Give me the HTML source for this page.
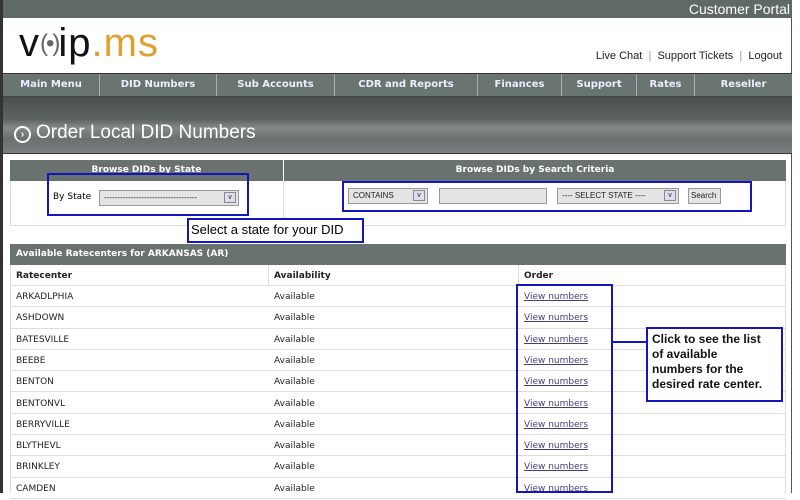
<!DOCTYPE html>
<html><head><style>
*{margin:0;padding:0;box-sizing:border-box}
body{width:800px;height:493px;overflow:hidden;background:#fff;font-family:"Liberation Sans",sans-serif;position:relative}
.a{position:absolute}
.top{left:0;top:0;width:792px;height:18px;background:#5f6966;border-left:3px solid #333}
.nav{left:3px;top:73px;width:789px;height:24px;background:#6a7572;border-top:1px solid #333;border-bottom:1px solid #444}
.nav div{position:absolute;top:0;height:22px;line-height:22px;color:#eef;font-family:"DejaVu Sans",sans-serif;font-weight:bold;font-size:10px;text-align:center;border-right:1px solid #aab}
.ban{left:3px;top:97px;width:789px;height:57px;background:linear-gradient(180deg,#4a4f4f 0%,#5e6363 40%,#858989 55%,#6a6f6f 75%,#7a7e7e 100%);border-bottom:1px solid #333}
.hd{background:#69726f;color:#fff;font-family:"DejaVu Sans",sans-serif;font-weight:bold;font-size:9px;text-align:center;line-height:21px}
.row{left:10px;width:776px;height:21.3px;border-bottom:1px solid #ddd;font-family:"DejaVu Sans",sans-serif;font-size:9px;color:#222;line-height:22px}
.row span{position:absolute;top:0}
.blue{border:2px solid #1515c0}
.sel{background:#e4e4e4;border:1px solid #999;font-size:8px;color:#222;line-height:14px;padding-left:4px}
.arr{position:absolute;right:2px;top:1px;width:12px;height:11px;border:1px solid #889;background:#dde;font-size:7px;line-height:10px;text-align:center}
a{color:#4a3d7a;text-decoration:underline}
</style></head><body>
<div class="a top"></div>
<div class="a" style="right:10px;top:1px;color:#fff;font-size:14px">Customer Portal</div>
<div class="a" style="left:0;top:18px;width:3px;height:475px;background:#333"></div>
<div class="a" style="left:791px;top:18px;width:1px;height:475px;background:#555"></div>
<div class="a" style="left:19px;top:20px;font-size:40px;letter-spacing:1px;color:#111;line-height:46px">v<span style="font-size:24px;color:#666;vertical-align:5px;letter-spacing:-2px">(•)</span>ip<span style="color:#e0a030">.ms</span></div>
<div class="a" style="right:18px;top:50px;font-size:11px;color:#222">Live Chat &nbsp;<span style="color:#999">|</span>&nbsp; Support Tickets &nbsp;<span style="color:#999">|</span>&nbsp; Logout</div>
<div class="a nav">
<div style="left:0;width:97px">Main Menu</div>
<div style="left:97px;width:117px">DID Numbers</div>
<div style="left:214px;width:118px">Sub Accounts</div>
<div style="left:332px;width:143px">CDR and Reports</div>
<div style="left:475px;width:84px">Finances</div>
<div style="left:559px;width:75px">Support</div>
<div style="left:634px;width:58px">Rates</div>
<div style="left:692px;width:97px;border:0">Reseller</div>
</div>
<div class="a ban"></div>
<div class="a" style="left:14px;top:126px;width:17px;height:17px;border:2px solid #fff;border-radius:50%;color:#fff;font-size:10px;line-height:13px;text-align:center;font-weight:bold">›</div>
<div class="a" style="left:36px;top:122px;color:#fff;font-size:19px">Order Local DID Numbers</div>

<div class="a hd" style="left:10px;top:160px;width:273px;height:21px">Browse DIDs by State</div>
<div class="a hd" style="left:284px;top:160px;width:502px;height:21px">Browse DIDs by Search Criteria</div>
<div class="a" style="left:10px;top:181px;width:776px;height:45px;border:1px solid #ddd;border-top:0"></div>
<div class="a" style="left:283px;top:181px;width:1px;height:45px;background:#ddd"></div>
<div class="a" style="left:53px;top:192px;font-size:9px;font-family:'DejaVu Sans',sans-serif">By State</div>
<div class="a sel" style="left:99px;top:190px;width:140px;height:16px">-----------------------------------<span class="arr">v</span></div>
<div class="a blue" style="left:47px;top:173px;width:202px;height:43px"></div>
<div class="a blue" style="left:187px;top:218px;width:177px;height:25px;background:#fff;font-size:13px;line-height:20px;padding-left:2px">Select a state for your DID</div>
<div class="a sel" style="left:348px;top:188px;width:80px;height:16px">CONTAINS<span class="arr">v</span></div>
<div class="a sel" style="left:439px;top:188px;width:108px;height:16px"></div>
<div class="a sel" style="left:557px;top:188px;width:122px;height:16px">---- SELECT STATE ----<span class="arr">v</span></div>
<div class="a sel" style="left:688px;top:188px;width:33px;height:16px;padding-left:2px">Search</div>
<div class="a blue" style="left:342px;top:181px;width:410px;height:31px"></div>

<div class="a hd" style="left:10px;top:244px;width:776px;height:21px;text-align:left;padding-left:6px">Available Ratecenters for ARKANSAS (AR)</div>
<div class="a row" style="top:265px;font-weight:bold;height:21px"><span style="left:6px">Ratecenter</span><span style="left:264px">Availability</span><span style="left:514px">Order</span></div>
<div class="a" style="left:10px;top:265px;width:776px;height:228px;border-left:1px solid #ddd;border-right:1px solid #ddd"></div>
<div class="a" style="left:268px;top:265px;width:1px;height:21px;background:#ddd"></div>
<div class="a" style="left:518px;top:265px;width:1px;height:21px;background:#ddd"></div>

<div class="a row" style="top:286px"><span style="left:6px">ARKADLPHIA</span><span style="left:264px">Available</span><span style="left:514px"><a>View numbers</a></span></div>
<div class="a row" style="top:307.3px"><span style="left:6px">ASHDOWN</span><span style="left:264px">Available</span><span style="left:514px"><a>View numbers</a></span></div>
<div class="a row" style="top:328.6px"><span style="left:6px">BATESVILLE</span><span style="left:264px">Available</span><span style="left:514px"><a>View numbers</a></span></div>
<div class="a row" style="top:349.9px"><span style="left:6px">BEEBE</span><span style="left:264px">Available</span><span style="left:514px"><a>View numbers</a></span></div>
<div class="a row" style="top:371.2px"><span style="left:6px">BENTON</span><span style="left:264px">Available</span><span style="left:514px"><a>View numbers</a></span></div>
<div class="a row" style="top:392.5px"><span style="left:6px">BENTONVL</span><span style="left:264px">Available</span><span style="left:514px"><a>View numbers</a></span></div>
<div class="a row" style="top:413.8px"><span style="left:6px">BERRYVILLE</span><span style="left:264px">Available</span><span style="left:514px"><a>View numbers</a></span></div>
<div class="a row" style="top:435.1px"><span style="left:6px">BLYTHEVL</span><span style="left:264px">Available</span><span style="left:514px"><a>View numbers</a></span></div>
<div class="a row" style="top:456.4px"><span style="left:6px">BRINKLEY</span><span style="left:264px">Available</span><span style="left:514px"><a>View numbers</a></span></div>
<div class="a row" style="top:477.7px"><span style="left:6px">CAMDEN</span><span style="left:264px">Available</span><span style="left:514px"><a>View numbers</a></span></div>

<div class="a blue" style="left:516px;top:284px;width:97px;height:209px"></div>
<div class="a" style="left:612px;top:341px;width:35px;height:2px;background:#1515c0"></div>
<div class="a blue" style="left:646px;top:327px;width:137px;height:75px;background:#fff;font-size:12px;line-height:15px;padding:3px 14px 0 4px;font-weight:bold;color:#111">Click to see the list of available numbers for the desired rate center.</div>
</body></html>
